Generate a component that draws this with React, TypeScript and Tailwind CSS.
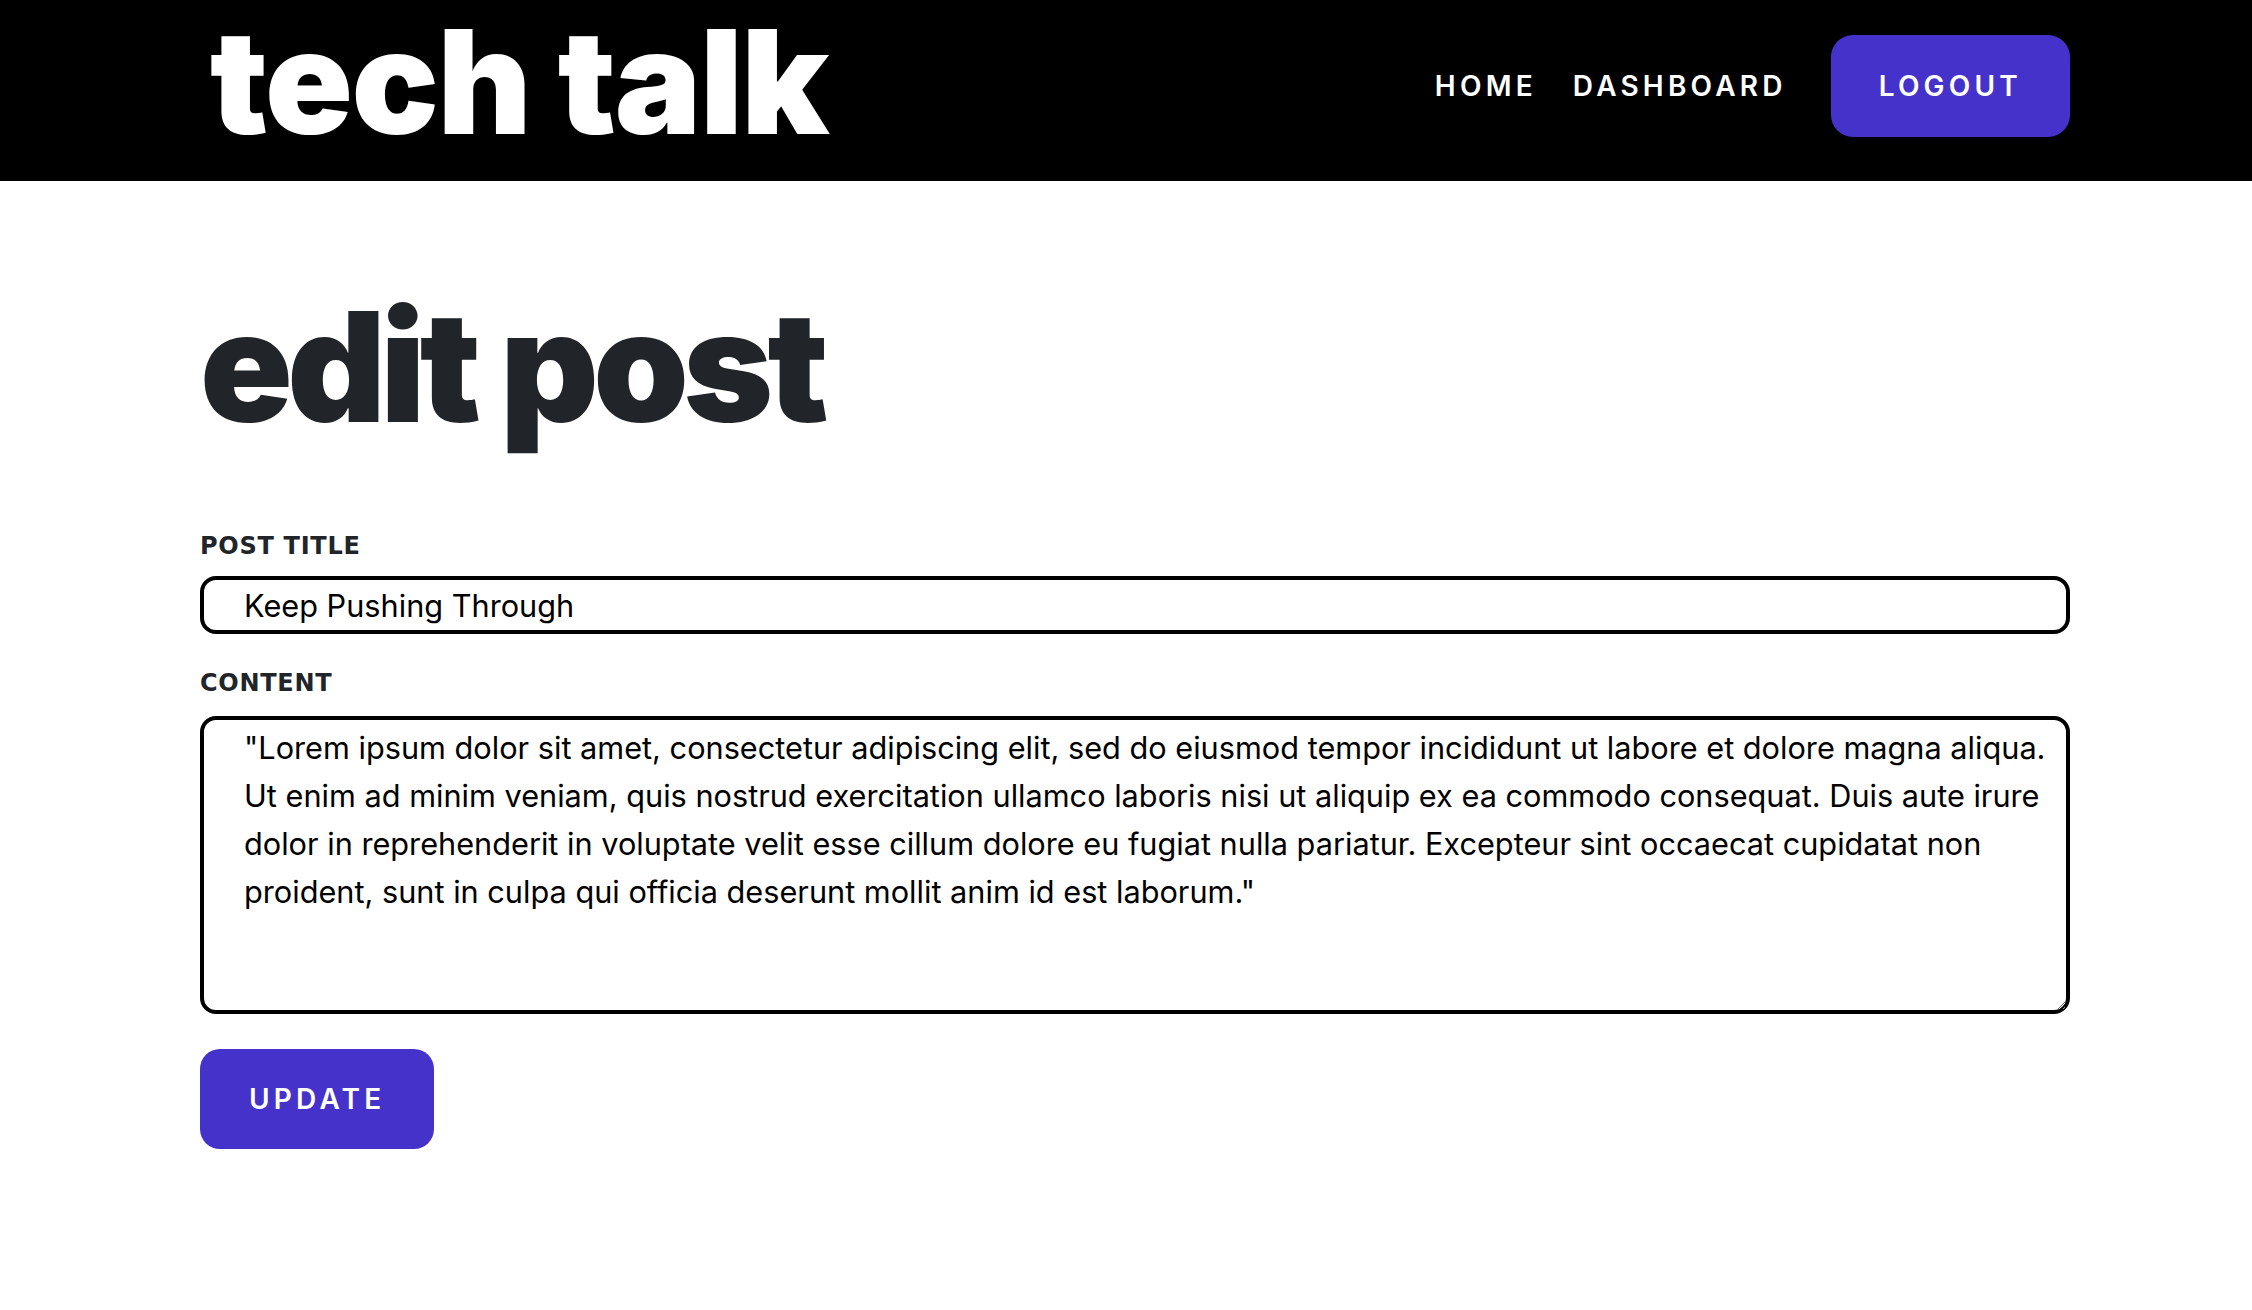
const labelFont = { fontFamily: '"DejaVu Sans", "Noto Sans", sans-serif' };

const bodyText =
  '"Lorem ipsum dolor sit amet, consectetur adipiscing elit, sed do eiusmod tempor incididunt ut labore et dolore magna aliqua. Ut enim ad minim veniam, quis nostrud exercitation ullamco laboris nisi ut aliquip ex ea commodo consequat. Duis aute irure dolor in reprehenderit in voluptate velit esse cillum dolore eu fugiat nulla pariatur. Excepteur sint occaecat cupidatat non proident, sunt in culpa qui officia deserunt mollit anim id est laborum."';

const Navbar = () => (
  <header className="bg-black h-[181px]">
    <div className="h-full pl-[200px] pr-[182px] flex items-center justify-between">
      <a href="#" className="text-white font-black text-[145px] leading-none tracking-[-0.01em] pl-[10px] mb-[18px] font-['Inter',sans-serif]">
        tech talk
      </a>
      <nav className="flex items-center mb-[9px] font-['Inter',sans-serif]">
        <a href="#" className="text-white text-[28px] font-semibold uppercase tracking-[0.15em]">
          Home
        </a>
        <a href="#" className="ml-[36px] text-white text-[28px] font-semibold uppercase tracking-[0.15em]">
          Dashboard
        </a>
        <button className="ml-[44px] h-[102px] px-[48px] rounded-[22px] bg-[#4532ca] text-white text-[28px] font-semibold uppercase tracking-[0.15em]">
          Logout
        </button>
      </nav>
    </div>
  </header>
);

export default function App() {
  return (
    <div className="min-h-screen bg-white font-['Inter',sans-serif]">
      <Navbar />
      <main className="pl-[200px] pr-[182px] pt-[109px]">
        <h1 className="text-[#212529] font-black text-[153px] leading-none tracking-[-0.037em]">edit post</h1>
        <form className="flex flex-col mt-[91px]" onSubmit={e => e.preventDefault()}>
          <label className="text-[#212529] text-[24px] font-bold leading-none uppercase tracking-[0.03em]" style={labelFont}>
            Post Title
          </label>
          <input
            defaultValue="Keep Pushing Through"
            className="mt-[18px] h-[58px] border-4 border-black rounded-[16px] pl-[40px] pr-[10px] text-[30.7px] leading-[48px] text-black outline-none"
          />
          <label className="mt-[37px] text-[#212529] text-[24px] font-bold leading-none uppercase tracking-[0.03em]" style={labelFont}>
            Content
          </label>
          <textarea
            defaultValue={bodyText}
            className="mt-[21px] h-[298px] border-4 border-black rounded-[16px] pl-[40px] pr-[10px] py-[4px] text-[30.7px] leading-[48px] text-black outline-none resize-y"
          />
          <div className="mt-[35px]">
            <button
              type="submit"
              className="h-[100px] px-[49px] rounded-[20px] bg-[#4532ca] text-white text-[28px] font-semibold uppercase tracking-[0.15em]"
            >
              Update
            </button>
          </div>
        </form>
      </main>
    </div>
  );
}
